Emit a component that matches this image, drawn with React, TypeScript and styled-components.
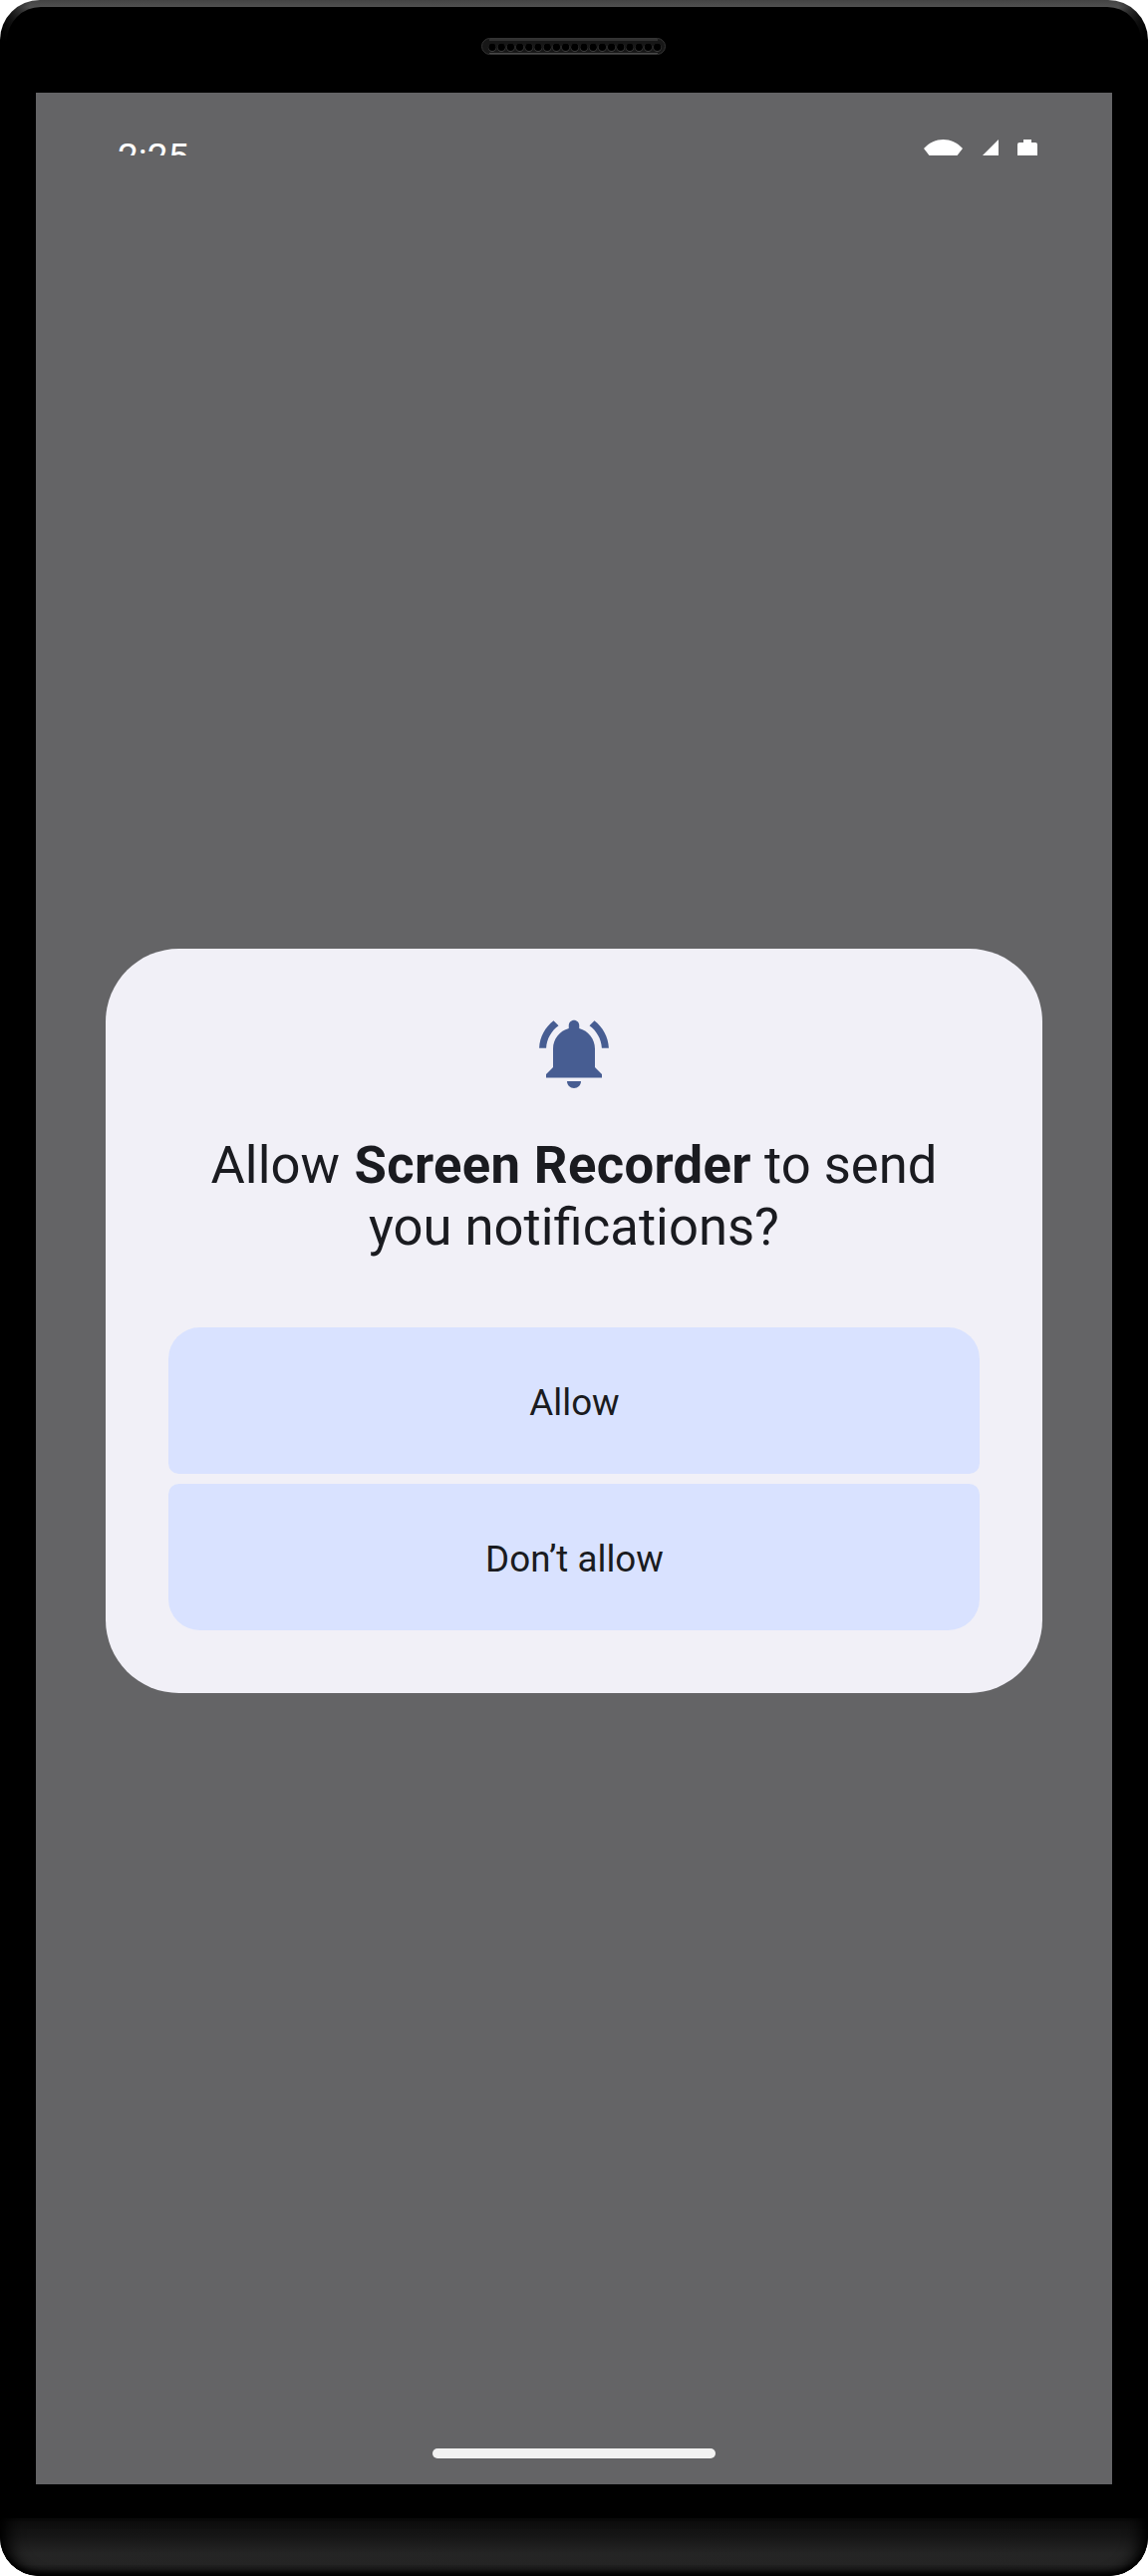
import React from "react";
import styled, { createGlobalStyle } from "styled-components";

const GlobalStyle = createGlobalStyle`
  *, *::before, *::after { box-sizing: border-box; }
  body { margin: 0; background: #ffffff; font-family: Roboto, sans-serif; }
`;

const Phone = styled.div`
  display: flex;
  flex-direction: column;
  width: 1152px;
  height: 2585px;
  overflow: hidden;
  border-radius: 40px 40px 39px 39px;
  background:
    linear-gradient(to right, #000 0, transparent 30px, transparent 1122px, #000 100%),
    linear-gradient(to bottom, #434343 0, #505050 7px, #383838 16px, #000 42px);
`;

const Face = styled.div`
  display: flex;
  flex-direction: column;
  height: 2520px;
  margin: 7px 7px 0;
  padding: 0 29px;
  border-radius: 34px 34px 0 0;
  background: #000000;
`;

const TopBezel = styled.div`
  display: flex;
  justify-content: center;
  height: 86px;
  padding-top: 31px;
`;

const Grille = styled.svg`
  display: block;
  width: 186px;
  height: 17px;
`;

const Screen = styled.main`
  display: flex;
  flex-direction: column;
  align-items: center;
  width: 1080px;
  height: 2400px;
  background: #646466;
`;

const StatusBar = styled.header`
  display: flex;
  justify-content: space-between;
  align-items: flex-start;
  width: 100%;
  height: 63px;
  padding: 0 75px 0 82px;
  overflow: hidden;
  color: #ffffff;
`;

const Clock = styled.time`
  margin-top: 43px;
  font-size: 37px;
  line-height: 44px;
  letter-spacing: 0;
`;

const StatusIcons = styled.svg`
  display: block;
  width: 114px;
  height: 16px;
  margin-top: 47px;
`;

const Dialog = styled.section`
  display: flex;
  flex-direction: column;
  align-items: center;
  width: 940px;
  height: 747px;
  margin-top: 796px;
  padding: 63px;
  border-radius: 73.5px;
  background: #f1f0f7;
`;

const BellIcon = styled.svg`
  display: block;
  flex: none;
  width: 84px;
  height: 84px;
`;

const Title = styled.h1`
  width: 760px;
  margin: 39px 0 0;
  color: #1a1b20;
  font-size: 52.6px;
  font-weight: 400;
  line-height: 62px;
  text-align: center;
`;

const AppName = styled.strong`
  margin-left: 1.5px;
  font-weight: 700;
  letter-spacing: 0.35px;
`;

const Actions = styled.div`
  display: flex;
  flex-direction: column;
  gap: 10px;
  width: 814px;
  margin-top: auto;
`;

const ActionButton = styled.button<{ $place: "top" | "bottom" }>`
  height: 147px;
  padding: 4px 0 0 1px;
  border: 0;
  border-radius: ${({ $place }) =>
    $place === "top" ? "31.5px 31.5px 10.5px 10.5px" : "10.5px 10.5px 31.5px 31.5px"};
  background: #d9e2ff;
  color: #1a1b20;
  font-family: inherit;
  font-size: 36.75px;
  line-height: 52px;
`;

const HomeHandle = styled.div`
  width: 284px;
  height: 10px;
  margin: auto 0 26px;
  border-radius: 5px;
  background: #f2f2f2;
`;

const Chin = styled.div`
  height: 58px;
  border-radius: 0 0 39px 39px;
  background: linear-gradient(to bottom, #0d0d0d 0, #151515 30%, #252525 62%, #242424 80%, #151515 93%, #0b0b0b 100%);
  box-shadow: inset 0 -3px 5px #000, inset 16px 0 16px -8px #000, inset -16px 0 16px -8px #000;
`;

const holes = Array.from({ length: 19 }, (_, i) => 11 + i * 9.2);

const Speaker = () => (
  <Grille viewBox="0 0 186 17">
    <rect x="0.5" y="0.5" width="184" height="16" rx="8" fill="#171717" stroke="#343434" />
    <path d="M8 2H177" stroke="#303030" strokeWidth="2" />
    {holes.map((x) => (
      <g key={x}>
        <circle cx={x} cy="9.8" r="4.2" fill="#3d3d3d" />
        <circle cx={x} cy="9.2" r="3.7" fill="#000" />
      </g>
    ))}
    <path d="M8 15.5H177" stroke="#484848" />
  </Grille>
);

export default function App() {
  return (
    <>
      <GlobalStyle />
      <Phone>
        <Face>
          <TopBezel>
            <Speaker />
          </TopBezel>
          <Screen>
            <StatusBar>
              <Clock>2:25</Clock>
              <StatusIcons viewBox="0 0 114 16" fill="#fff">
                <path d="M0 9C11 -3 28 -3 39 9L33.5 16H5.5Z" />
                <path d="M59 16L75 0V16Z" />
                <path d="M94 16V5Q94 3 96 3H100V0H108V3H112Q114 3 114 5V16Z" />
              </StatusIcons>
            </StatusBar>
            <Dialog>
              <BellIcon viewBox="0 0 24 24" fill="#475d92">
                <path d="M7.58 4.08L6.15 2.65C3.75 4.48 2.17 7.3 2.03 10.5h2c.15-2.65 1.51-4.97 3.55-6.42zM19.97 10.5h2c-.15-3.2-1.73-6.02-4.12-7.85l-1.42 1.43c2.02 1.45 3.39 3.77 3.54 6.42z" />
                <path d="M18 10.7c0-2.8-1.9-5.15-4.5-5.82V4c0-.83-.67-1.5-1.5-1.5s-1.5.67-1.5 1.5v.88C7.9 5.55 6 7.9 6 10.7V16l-2 2v1h16v-1l-2-2z" />
                <path d="M10 20h4c0 1.1-.9 2-2 2s-2-.9-2-2z" />
              </BellIcon>
              <Title>
                Allow <AppName>Screen Recorder</AppName> to send you notifications?
              </Title>
              <Actions>
                <ActionButton $place="top">Allow</ActionButton>
                <ActionButton $place="bottom">Don’t allow</ActionButton>
              </Actions>
            </Dialog>
            <HomeHandle />
          </Screen>
        </Face>
        <Chin />
      </Phone>
    </>
  );
}
